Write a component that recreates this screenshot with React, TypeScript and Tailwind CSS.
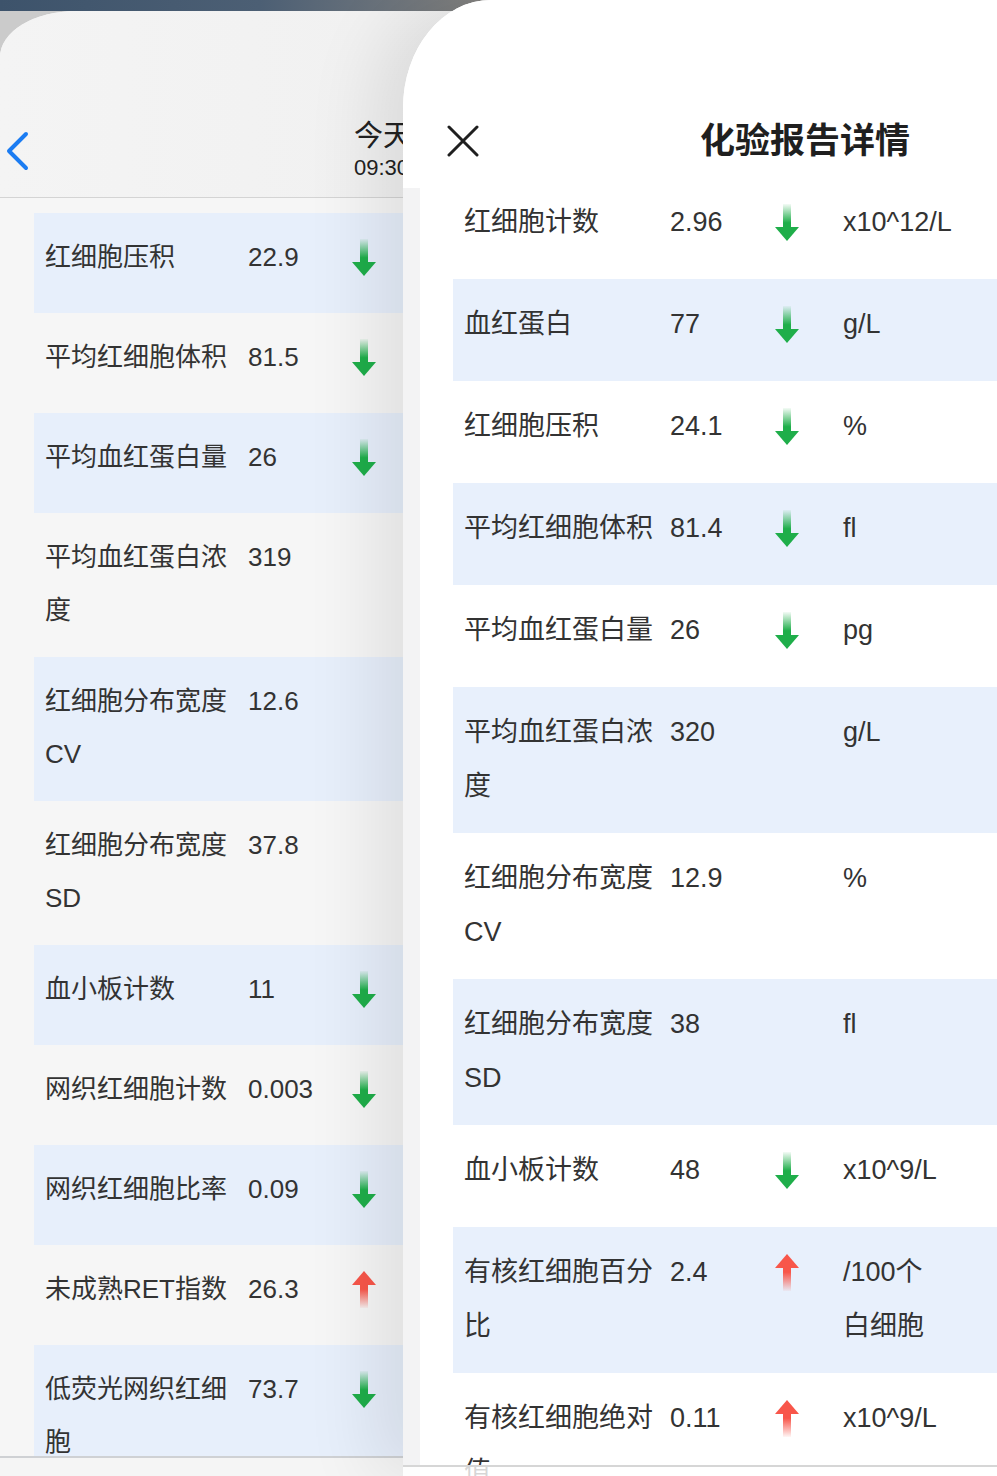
import React, { useId } from "react";

type Dir = "down" | "up" | null;
type Item = { name: string; value: string; dir: Dir; unit?: React.ReactNode };

const leftItems: Item[] = [
  { name: "红细胞压积", value: "22.9", dir: "down" },
  { name: "平均红细胞体积", value: "81.5", dir: "down" },
  { name: "平均血红蛋白量", value: "26", dir: "down" },
  { name: "平均血红蛋白浓度", value: "319", dir: null },
  { name: "红细胞分布宽度CV", value: "12.6", dir: null },
  { name: "红细胞分布宽度SD", value: "37.8", dir: null },
  { name: "血小板计数", value: "11", dir: "down" },
  { name: "网织红细胞计数", value: "0.003", dir: "down" },
  { name: "网织红细胞比率", value: "0.09", dir: "down" },
  { name: "未成熟RET指数", value: "26.3", dir: "up" },
  { name: "低荧光网织红细胞", value: "73.7", dir: "down" },
];

const rightItems: Item[] = [
  { name: "红细胞计数", value: "2.96", dir: "down", unit: "x10^12/L" },
  { name: "血红蛋白", value: "77", dir: "down", unit: "g/L" },
  { name: "红细胞压积", value: "24.1", dir: "down", unit: "%" },
  { name: "平均红细胞体积", value: "81.4", dir: "down", unit: "fl" },
  { name: "平均血红蛋白量", value: "26", dir: "down", unit: "pg" },
  { name: "平均血红蛋白浓度", value: "320", dir: null, unit: "g/L" },
  { name: "红细胞分布宽度CV", value: "12.9", dir: null, unit: "%" },
  { name: "红细胞分布宽度SD", value: "38", dir: null, unit: "fl" },
  { name: "血小板计数", value: "48", dir: "down", unit: "x10^9/L" },
  {
    name: "有核红细胞百分比",
    value: "2.4",
    dir: "up",
    unit: (
      <>
        /100个
        <br />
        白细胞
      </>
    ),
  },
  { name: "有核红细胞绝对值", value: "0.11", dir: "up", unit: "x10^9/L" },
];

function Arrow({ dir }: { dir: "down" | "up" }) {
  const id = useId().replace(/:/g, "");
  if (dir === "down") {
    const c = "#1fae4a";
    return (
      <svg width="24" height="37" viewBox="0 0 24 37">
        <defs>
          <linearGradient id={id} x1="0" y1="0" x2="0" y2="1">
            <stop offset="0" stopColor={c} stopOpacity="0.05" />
            <stop offset="0.75" stopColor={c} stopOpacity="1" />
          </linearGradient>
        </defs>
        <rect x="8" y="0" width="8" height="25" fill={`url(#${id})`} />
        <polygon points="0,23 24,23 12,37" fill={c} />
      </svg>
    );
  }
  const c = "#f8564a";
  return (
    <svg width="24" height="37" viewBox="0 0 24 37">
      <defs>
        <linearGradient id={id} x1="0" y1="0" x2="0" y2="1">
          <stop offset="0.25" stopColor={c} stopOpacity="1" />
          <stop offset="1" stopColor={c} stopOpacity="0.05" />
        </linearGradient>
      </defs>
      <rect x="8" y="12" width="8" height="25" fill={`url(#${id})`} />
      <polygon points="0,14 12,0 24,14" fill={c} />
    </svg>
  );
}

function LeftRow({ item, blue }: { item: Item; blue: boolean }) {
  return (
    <div
      className={`flex items-start min-h-[100px] pt-[18px] pb-[20px] pl-[11px] text-[26px] leading-[53px] text-[#333333] ${
        blue ? "bg-[#e7effb]" : ""
      }`}
    >
      <div className="w-[203px] shrink-0">{item.name}</div>
      <div className="w-[104px] shrink-0">{item.value}</div>
      <div className="w-[24px] h-[53px] shrink-0 flex items-center">
        {item.dir && <Arrow dir={item.dir} />}
      </div>
    </div>
  );
}

function RightRow({ item, blue }: { item: Item; blue: boolean }) {
  return (
    <div
      className={`flex items-start min-h-[102px] pt-[18px] pb-[20px] pl-[11px] text-[27px] leading-[54px] text-[#333333] ${
        blue ? "bg-[#e8f0fc]" : ""
      }`}
    >
      <div className="w-[206px] shrink-0">{item.name}</div>
      <div className="w-[105px] shrink-0">{item.value}</div>
      <div className="w-[24px] h-[54px] shrink-0 flex items-center">
        {item.dir && <Arrow dir={item.dir} />}
      </div>
      <div className="ml-[44px] w-[150px] shrink-0">{item.unit}</div>
    </div>
  );
}

export default function App() {
  return (
    <div
      className="relative w-[997px] h-[1476px] overflow-hidden bg-[#cbcbcb]"
      style={{ fontFamily: '"Liberation Sans", "Noto Sans CJK SC", sans-serif' }}
    >
      {/* top status band */}
      <div className="h-[11px] w-[520px] bg-gradient-to-r from-[#3d536b] via-[#4c5f74] to-[#8d8881]" />

      {/* background page */}
      <div className="relative h-[1465px] w-[997px] rounded-tl-[76px_46px] overflow-hidden bg-[#f6f6f6] flex flex-col">
        <div className="h-[187px] shrink-0 bg-gradient-to-r from-[#f4f4f4] to-[#ececec] border-b border-[#d4d4d4] flex items-end pb-[14px]">
          <div className="flex items-center w-full">
            <div className="pl-[5px] w-[354px] flex items-center">
              <svg width="24" height="40" viewBox="0 0 24 40">
                <polyline
                  points="21,3 4,20 21,37"
                  fill="none"
                  stroke="#1b7cf2"
                  strokeWidth="4"
                  strokeLinecap="round"
                  strokeLinejoin="round"
                />
              </svg>
            </div>
            <div className="flex flex-col text-[#222222]">
              <div className="text-[29px] leading-[34px]">今天</div>
              <div className="text-[22px] leading-[30px]">09:30</div>
            </div>
          </div>
        </div>
        <div className="flex-1 pt-[15px] pl-[34px] pr-[34px]">
          {leftItems.map((it, i) => (
            <LeftRow key={i} item={it} blue={i % 2 === 0} />
          ))}
        </div>
        {/* bottom toolbar of background page */}
        <div className="absolute left-0 right-0 bottom-0 h-[20px] border-t-2 border-[#cfd1d4] bg-[#f5f5f5]" />
      </div>

      {/* foreground sheet */}
      <div className="absolute top-0 left-[403px] w-[594px] h-[1476px] rounded-tl-[88px_108px] overflow-hidden bg-white shadow-[-30px_0_70px_rgba(0,0,0,0.09)] flex flex-col">
        <div className="h-[188px] shrink-0 flex flex-col justify-end pb-[22px] relative z-10 bg-white">
          <div className="flex items-center h-[50px] pl-[44px]">
            <svg width="32" height="32" viewBox="0 0 32 32">
              <path
                d="M2 2 L30 30 M30 2 L2 30"
                stroke="#1f1f1f"
                strokeWidth="3"
                strokeLinecap="round"
              />
            </svg>
            <div className="ml-[221px] text-[35px] leading-[50px] font-bold text-[#1f1f1f]">
              化验报告详情
            </div>
          </div>
        </div>
        <div className="flex-1 flex min-h-0">
          <div className="w-[17px] shrink-0 bg-[#f3f3f4]" />
          <div className="flex-1 pl-[33px] overflow-hidden">
            <div className="-mt-[11px] w-[600px]">
              {rightItems.map((it, i) => (
                <RightRow key={i} item={it} blue={i % 2 === 1} />
              ))}
            </div>
          </div>
        </div>
        {/* bottom toolbar of sheet */}
        <div className="absolute left-0 right-0 bottom-0 h-[11px] border-t-2 border-[#d6d6d6] bg-white/80 z-20" />
      </div>
    </div>
  );
}
